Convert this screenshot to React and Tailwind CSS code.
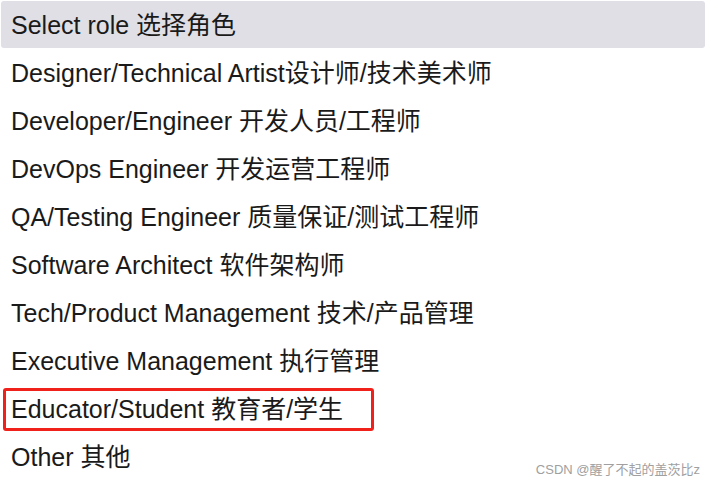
import React from 'react';

const roles = [
  'Designer/Technical Artist设计师/技术美术师',
  'Developer/Engineer 开发人员/工程师',
  'DevOps Engineer 开发运营工程师',
  'QA/Testing Engineer 质量保证/测试工程师',
  'Software Architect 软件架构师',
  'Tech/Product Management 技术/产品管理',
  'Executive Management 执行管理',
  'Educator/Student 教育者/学生',
  'Other 其他',
];

export default function App() {
  return (
    <div
      className="relative w-[709px] h-[484px] bg-white text-[#1a1a1a] overflow-hidden"
      style={{ fontFamily: '"Liberation Sans", Arial, "Noto Sans CJK SC", sans-serif' }}
    >
      <div className="flex flex-col pl-[1px] pr-[4px] pt-[1px]">
        <div className="h-[47px] flex items-center px-[10px] pt-[3px] bg-[#e0dfe5] rounded-[3px] text-[25px]">
          Select role 选择角色
        </div>
        {roles.map((r, i) => (
          <div key={i} className="h-[48px] flex items-center px-[10px] pt-[3px] text-[25px]">
            {i === 7 ? (
              <span className="-ml-[8px] w-[371px] h-[43px] flex items-center pl-[5px] border-[3px] border-[#f0201a] rounded-[3px]">
                {r}
              </span>
            ) : (
              r
            )}
          </div>
        ))}
      </div>
      <div className="absolute right-[9px] bottom-[5px] text-[13px] text-[#a0a0a0]">
        CSDN @醒了不起的盖茨比z
      </div>
    </div>
  );
}
